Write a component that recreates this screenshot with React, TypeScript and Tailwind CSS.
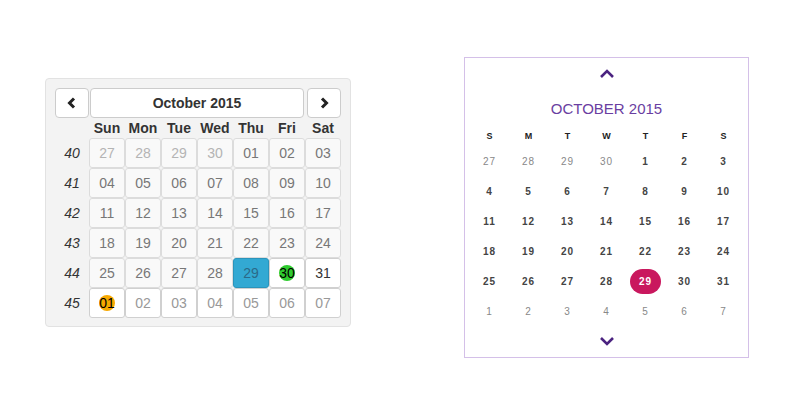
import React from "react";

type Cell = { d: string; kind: "prev" | "past" | "today" | "future" | "next"; dot?: string };

const weeks: { n: number; days: Cell[] }[] = [
  {
    n: 40,
    days: [
      { d: "27", kind: "prev" },
      { d: "28", kind: "prev" },
      { d: "29", kind: "prev" },
      { d: "30", kind: "prev" },
      { d: "01", kind: "past" },
      { d: "02", kind: "past" },
      { d: "03", kind: "past" },
    ],
  },
  { n: 41, days: ["04", "05", "06", "07", "08", "09", "10"].map((d) => ({ d, kind: "past" as const })) },
  { n: 42, days: ["11", "12", "13", "14", "15", "16", "17"].map((d) => ({ d, kind: "past" as const })) },
  { n: 43, days: ["18", "19", "20", "21", "22", "23", "24"].map((d) => ({ d, kind: "past" as const })) },
  {
    n: 44,
    days: [
      { d: "25", kind: "past" },
      { d: "26", kind: "past" },
      { d: "27", kind: "past" },
      { d: "28", kind: "past" },
      { d: "29", kind: "today" },
      { d: "30", kind: "future", dot: "bg-[#2ecc2e]" },
      { d: "31", kind: "future" },
    ],
  },
  {
    n: 45,
    days: [
      { d: "01", kind: "next", dot: "bg-[#f7a800]" },
      { d: "02", kind: "next" },
      { d: "03", kind: "next" },
      { d: "04", kind: "next" },
      { d: "05", kind: "next" },
      { d: "06", kind: "next" },
      { d: "07", kind: "next" },
    ],
  },
];

const cellStyle: Record<Cell["kind"], string> = {
  prev: "bg-[#f9f9f9] border-[#dcdcdc] text-[#b4b4b4]",
  past: "bg-[#f9f9f9] border-[#dcdcdc] text-[#777]",
  today: "bg-[#33a9d3] border-[#2b94bb] text-[#2b6a88]",
  future: "bg-white border-[#d0d0d0] text-[#333]",
  next: "bg-white border-[#d0d0d0] text-[#999]",
};

const Chevron = ({ dir }: { dir: "left" | "right" }) => (
  <svg width="10" height="12" viewBox="0 0 10 12">
    <polyline
      points={dir === "left" ? "7,1.5 2.5,6 7,10.5" : "3,1.5 7.5,6 3,10.5"}
      fill="none"
      stroke="#222"
      strokeWidth="3"
    />
  </svg>
);

const LeftCalendar = () => (
  <div className="mt-[78px] w-[306px] rounded-[4px] border border-[#e2e2e2] bg-[#f3f3f3] pt-[9px] pb-[8px] pl-[9px] pr-[8px] font-['Liberation_Sans',Arial,sans-serif] text-[14px]">
    <div className="grid grid-cols-[34px_repeat(7,36px)]">
      <button className="flex h-[30px] items-center justify-center rounded-[4px] border border-[#ccc] bg-white">
        <Chevron dir="left" />
      </button>
      <div className="col-span-6 mx-[1px] flex h-[30px] items-center justify-center rounded-[4px] border border-[#ccc] bg-white font-bold text-[#333]">
        October 2015
      </div>
      <button className="ml-[2px] flex h-[30px] items-center justify-center rounded-[4px] border border-[#ccc] bg-white">
        <Chevron dir="right" />
      </button>
      <div className="h-[20px]" />
      {["Sun", "Mon", "Tue", "Wed", "Thu", "Fri", "Sat"].map((d) => (
        <div key={d} className="flex h-[20px] items-center justify-center font-bold text-[#333]">
          {d}
        </div>
      ))}
      {weeks.map((w) => (
        <React.Fragment key={w.n}>
          <div className="flex h-[30px] items-center justify-center italic text-[#333]">{w.n}</div>
          {w.days.map((c, i) => (
            <div
              key={i}
              className={`flex h-[30px] items-center justify-center rounded-[3px] border ${cellStyle[c.kind]}`}
            >
              {c.dot ? (
                <span className={`flex h-[16px] w-[16px] items-center justify-center rounded-full text-black ${c.dot}`}>
                  {c.d}
                </span>
              ) : (
                c.d
              )}
            </div>
          ))}
        </React.Fragment>
      ))}
    </div>
  </div>
);

const rightRows: { d: string; other?: boolean; sel?: boolean }[][] = [
  [{ d: "27", other: true }, { d: "28", other: true }, { d: "29", other: true }, { d: "30", other: true }, { d: "1" }, { d: "2" }, { d: "3" }],
  ["4", "5", "6", "7", "8", "9", "10"].map((d) => ({ d })),
  ["11", "12", "13", "14", "15", "16", "17"].map((d) => ({ d })),
  ["18", "19", "20", "21", "22", "23", "24"].map((d) => ({ d })),
  [{ d: "25" }, { d: "26" }, { d: "27" }, { d: "28" }, { d: "29", sel: true }, { d: "30" }, { d: "31" }],
  ["1", "2", "3", "4", "5", "6", "7"].map((d) => ({ d, other: true })),
];

const Arrow = ({ up }: { up?: boolean }) => (
  <svg width="16" height="12" viewBox="0 0 16 12">
    <polyline
      points={up ? "2,9 8,3 14,9" : "2,3 8,9 14,3"}
      fill="none"
      stroke="#4b2380"
      strokeWidth="2.6"
    />
  </svg>
);

const RightCalendar = () => (
  <div className="ml-[113px] mt-[57px] flex w-[285px] flex-col items-center border border-[#d4c0e8] bg-white pt-[10px] pb-[10px] font-['Liberation_Sans',Arial,sans-serif]">
    <div className="flex h-[12px] items-center justify-center">
      <Arrow up />
    </div>
    <div className="mt-[19px] flex h-[20px] items-center text-[15px] text-[#6a3ea1]">OCTOBER 2015</div>
    <div className="mt-[9px] grid grid-cols-[repeat(7,39px)]">
      {["S", "M", "T", "W", "T", "F", "S"].map((d, i) => (
        <div key={i} className="flex h-[18px] items-center justify-center text-[9px] font-bold text-[#222]">
          {d}
        </div>
      ))}
      {rightRows.flat().map((c, i) => (
        <div key={i} className="flex h-[30px] items-center justify-center">
          {c.sel ? (
            <span className="flex h-[25px] w-[31px] items-center justify-center rounded-full bg-[#c9185e] text-[10px] font-bold tracking-[1px] text-white">
              {c.d}
            </span>
          ) : (
            <span
              className={`text-[10px] tracking-[1px] ${c.other ? "text-[#888]" : "font-bold text-[#444]"}`}
            >
              {c.d}
            </span>
          )}
        </div>
      ))}
    </div>
    <div className="mt-[9px] flex h-[12px] items-center justify-center">
      <Arrow />
    </div>
  </div>
);

export default function App() {
  return (
    <div className="flex h-[420px] w-[800px] items-start bg-white pl-[45px]">
      <LeftCalendar />
      <RightCalendar />
    </div>
  );
}
